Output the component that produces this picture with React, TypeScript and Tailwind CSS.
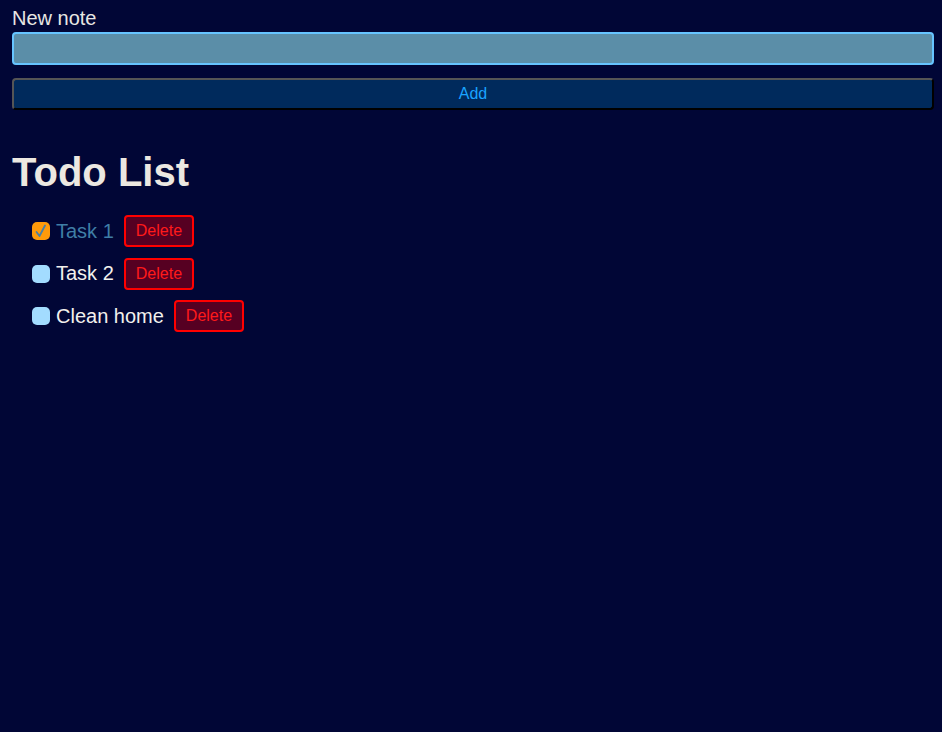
import React, { useState } from 'react';

interface Todo {
  id: number;
  text: string;
  done: boolean;
}

const initialTodos: Todo[] = [
  { id: 1, text: 'Task 1', done: true },
  { id: 2, text: 'Task 2', done: false },
  { id: 3, text: 'Clean home', done: false },
];

export default function App() {
  const [todos, setTodos] = useState<Todo[]>(initialTodos);
  const [note, setNote] = useState('');

  const addTodo = () => {
    if (!note.trim()) return;
    setTodos([...todos, { id: Date.now(), text: note.trim(), done: false }]);
    setNote('');
  };

  const toggle = (id: number) =>
    setTodos(todos.map((t) => (t.id === id ? { ...t, done: !t.done } : t)));

  const remove = (id: number) => setTodos(todos.filter((t) => t.id !== id));

  return (
    <div className="min-h-[732px] bg-[#010636] pl-3 pr-2 pt-[7px] font-['Liberation_Sans',Arial,sans-serif] text-[20px] text-[#e8e6e3]">
      {/* New note form */}
      <label className="block leading-[23px]">New note</label>
      <input
        value={note}
        onChange={(e) => setNote(e.target.value)}
        className="mt-[2px] block h-[33px] w-full rounded-[4px] border-2 border-[#66c4ff] bg-[#5b8ea8] px-2 text-[16px] text-white outline-none"
      />
      <button
        onClick={addTodo}
        className="mt-[13px] block h-[32px] w-full rounded-[4px] border-2 border-t-[#555555] border-l-[#555555] border-r-black border-b-black bg-[#002a5c] text-[16px] text-[#1aa3ff]"
      >
        Add
      </button>

      <h1 className="mt-[39px] text-[40px] font-bold leading-[46px] text-[#ece8e1]">Todo List</h1>

      <ul className="mt-[20px] flex flex-col gap-[10.5px] pl-5">
        {todos.map((todo) => (
          <li key={todo.id} className="flex h-[32px] items-center">
            <button
              onClick={() => toggle(todo.id)}
              className={`flex h-[18px] w-[18px] items-center justify-center rounded-[5px] ${
                todo.done ? 'bg-[#ff9a0a]' : 'bg-[#a3dcff]'
              }`}
            >
              {todo.done && (
                <svg viewBox="0 0 18 18" className="h-[18px] w-[18px]">
                  <path d="M4.5 10 L7.5 14 L13 3.5" fill="none" stroke="#4a7fa5" strokeWidth="1.8" strokeLinecap="round" strokeLinejoin="round" />
                </svg>
              )}
            </button>
            <span className={`ml-[6px] leading-[23px] ${todo.done ? 'text-[#3f7ea6]' : 'text-[#f2f0ed]'}`}>
              {todo.text}
            </span>
            <button
              onClick={() => remove(todo.id)}
              className="ml-[10px] h-[32px] rounded-[4px] border-2 border-[#ff0000] bg-[#560022] px-[10px] text-[16px] text-[#ff1a1a]"
            >
              Delete
            </button>
          </li>
        ))}
      </ul>
    </div>
  );
}
